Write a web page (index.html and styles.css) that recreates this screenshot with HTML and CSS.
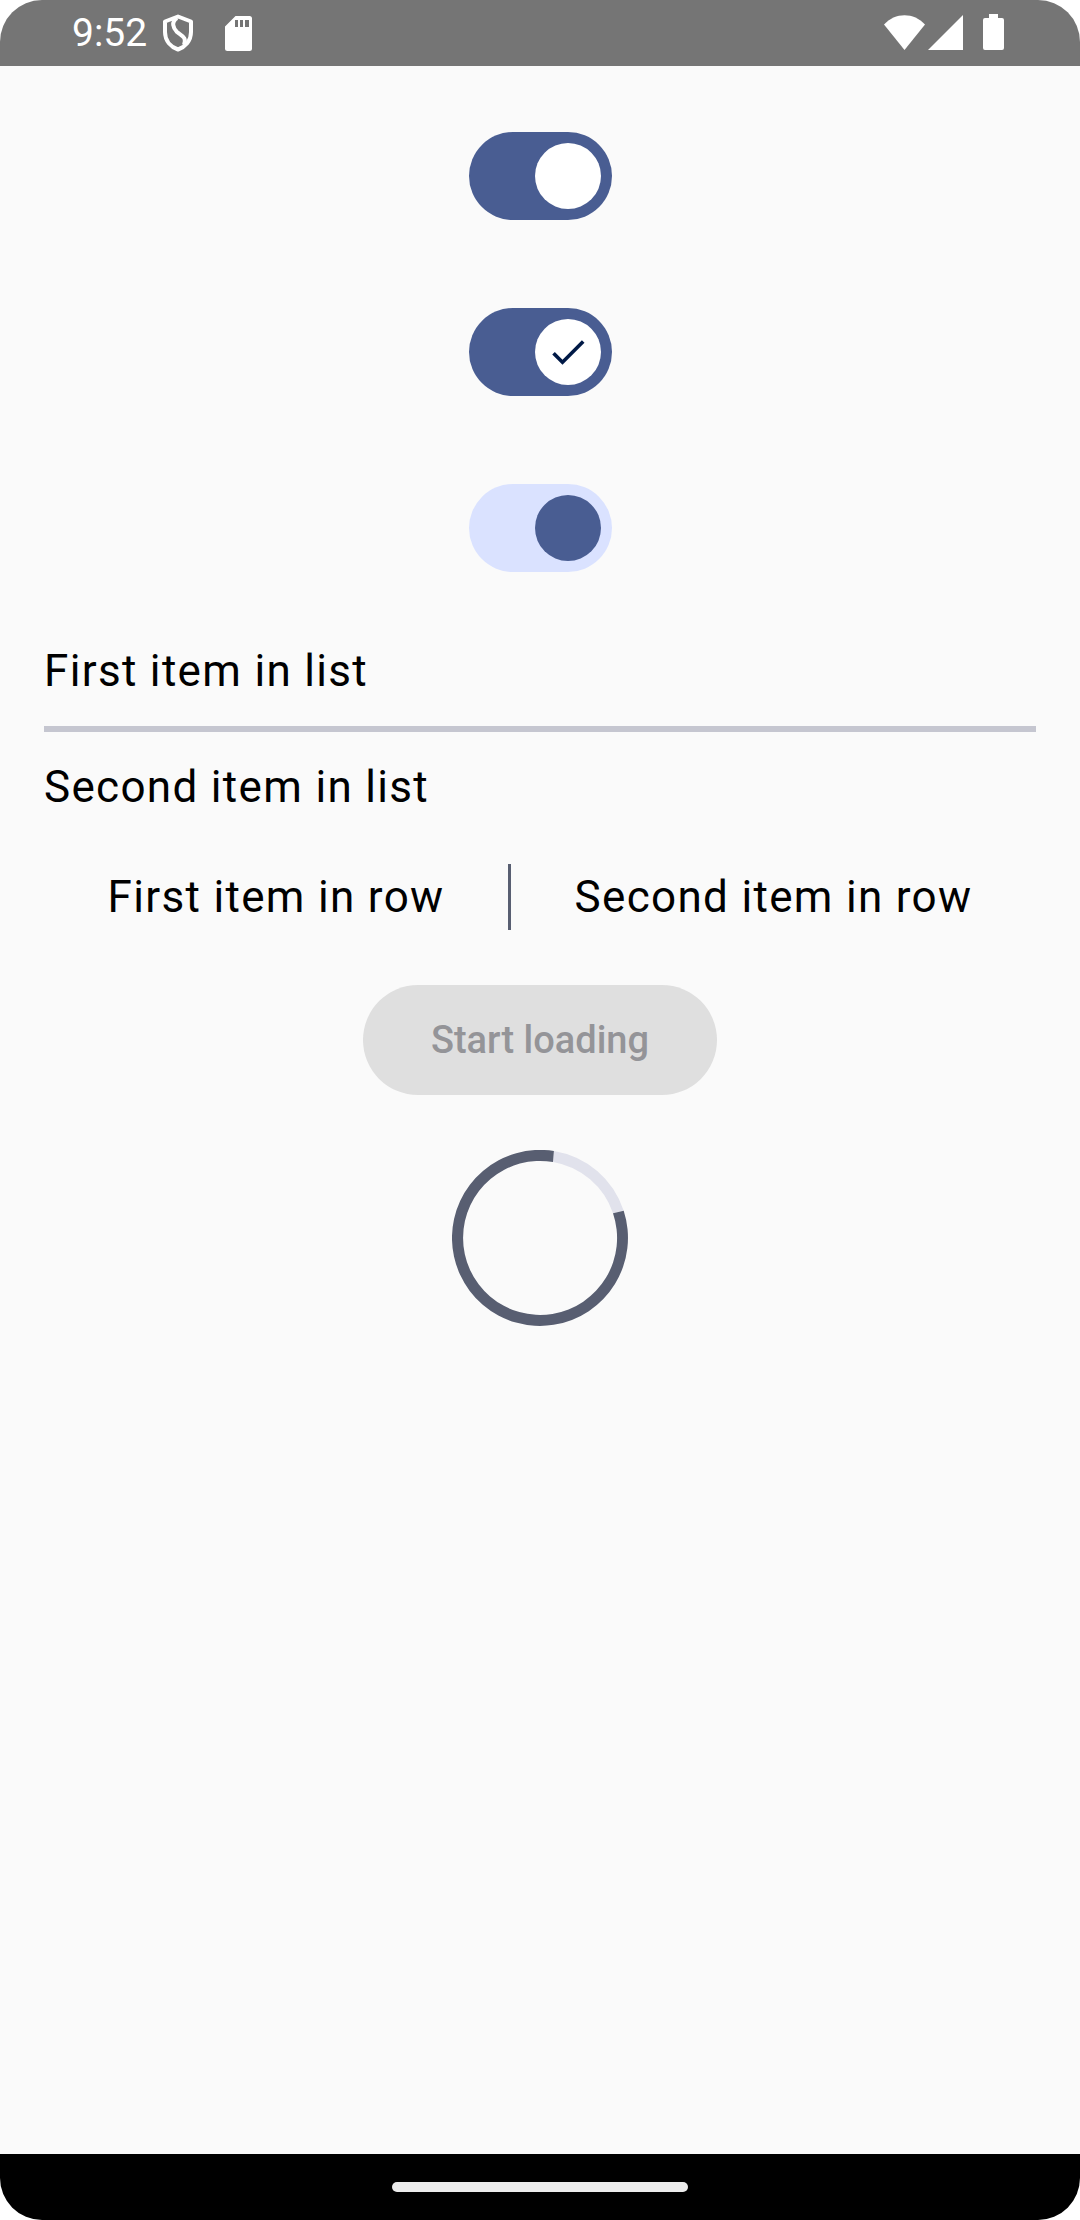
FILE: index.html
```html
<!DOCTYPE html>
<html lang="en">
<head>
  <meta charset="utf-8">
  <meta name="viewport" content="width=device-width, initial-scale=1">
  <title>Components</title>
  <link rel="stylesheet" href="styles.css">
</head>
<body>
  <div class="device">
    <header class="status-bar">
      <div class="status-start">
        <time class="clock">9:52</time>
        <svg class="icon-shield" viewBox="0 0 32 38" aria-hidden="true">
          <path d="M16 2.500 L29 7.500 V18 C29 27 23 33 16 35.500 C9 33 3 27 3 18 V7.500 Z"/>
          <path d="M15 4 C9 8 11 14 15 18 C20 22 25 23 22 31"/>
        </svg>
        <svg class="icon-card" viewBox="0 0 27 35" aria-hidden="true">
          <path fill-rule="evenodd" d="M10.500 0 H24.500 Q27 0 27 2.500 V32.500 Q27 35 24.500 35 H2.500 Q0 35 0 32.500 V10.500 Z M10 4 V11 H13 V4 Z M15 4 V11 H18 V4 Z M20 4 V11 H24 V4 Z"/>
        </svg>
      </div>
      <div class="status-end">
        <svg class="icon-wifi" viewBox="0 0 41 35" aria-hidden="true">
          <path d="M0 9.500 C11 -3 30 -3 41 9.500 L20.500 35 Z"/>
        </svg>
        <svg class="icon-signal" viewBox="0 0 35 35" aria-hidden="true">
          <path d="M35 0 V35 H0 Z"/>
        </svg>
        <svg class="icon-battery" viewBox="0 0 21 36" aria-hidden="true">
          <path d="M6 0 H15 V4 H19 Q21 4 21 6 V34 Q21 36 19 36 H2 Q0 36 0 34 V6 Q0 4 2 4 H6 Z"/>
        </svg>
      </div>
    </header>

    <main class="content">
      <section class="switches">
        <label class="switch">
          <input type="checkbox" role="switch" aria-label="Basic switch" checked>
          <span class="thumb"></span>
        </label>
        <label class="switch">
          <input type="checkbox" role="switch" aria-label="Switch with icon" checked>
          <span class="thumb">
            <svg class="icon-check" viewBox="0 0 24 24" aria-hidden="true">
              <path d="M9 16.170 4.830 12l-1.420 1.410L9 19 21 7l-1.410-1.410z"/>
            </svg>
          </span>
        </label>
        <label class="switch switch-tonal">
          <input type="checkbox" role="switch" aria-label="Switch with custom colors" checked>
          <span class="thumb"></span>
        </label>
      </section>

      <section class="list">
        <p>First item in list</p>
        <hr class="divider">
        <p>Second item in list</p>
      </section>

      <section class="row">
        <p>First item in row</p>
        <span class="divider-vertical"></span>
        <p>Second item in row</p>
      </section>

      <section class="loading">
        <button class="button" type="button" disabled>Start loading</button>
        <svg class="spinner" viewBox="0 0 176 176" role="progressbar" aria-label="Loading">
          <path class="spinner-track" d="M101.900 1 A88 88 0 0 1 171.700 60.800 L161 63.200 A77 77 0 0 0 101 12 Z"/>
          <path class="spinner-arc" d="M171.700 60.800 A88 88 0 1 1 101.900 1 L101 12 A77 77 0 1 0 161 63.200 Z"/>
        </svg>
      </section>
    </main>

    <footer class="nav-bar"><span class="nav-handle"></span></footer>
  </div>
</body>
</html>
```
FILE: styles.css
```css
* {
  box-sizing: border-box;
}

body {
  margin: 0;
  background: #ffffff;
  color: #000000;
  font-family: Roboto, sans-serif;
  font-size: 44px;
  line-height: 66px;
}

p {
  margin: 0;
  letter-spacing: 0.03em;
}

.device {
  display: flex;
  flex-direction: column;
  min-height: 100vh;
  overflow: hidden;
  border-radius: 42px;
  background: #fafafa;
}

/* Status bar */
.status-bar {
  display: flex;
  justify-content: space-between;
  height: 66px;
  padding: 0 76px 0 72px;
  background: #757575;
  color: #ffffff;
}

.status-start,
.status-end {
  display: flex;
  align-items: center;
}

.status-end {
  align-items: flex-end;
  padding-bottom: 16px;
}

.status-bar svg {
  display: block;
  fill: #ffffff;
}

.clock {
  font-size: 39px;
}

.status-bar .icon-shield {
  width: 32px;
  height: 38px;
  margin-left: 15px;
  fill: none;
  stroke: #ffffff;
  stroke-width: 4;
  stroke-linejoin: round;
}

.icon-card {
  width: 27px;
  height: 35px;
  margin-left: 31px;
}

.icon-wifi {
  width: 41px;
  height: 35px;
}

.icon-signal {
  width: 35px;
  height: 35px;
  margin-left: 3px;
}

.icon-battery {
  width: 21px;
  height: 36px;
  margin-left: 20px;
}

/* Content */
.content {
  flex: 1;
  padding: 66px 44px;
}

.switches {
  display: flex;
  flex-direction: column;
  align-items: center;
  gap: 88px;
}

.switch {
  display: grid;
  align-items: center;
  justify-items: end;
  width: 143px;
  height: 88px;
  padding: 11px;
  border-radius: 44px;
  background: #495d92;
}

.switch input,
.thumb {
  grid-area: 1 / 1;
  width: 66px;
  height: 66px;
  margin: 0;
  border-radius: 33px;
}

.switch input {
  opacity: 0;
}

.thumb {
  display: grid;
  place-items: center;
  background: #ffffff;
}

.switch-tonal {
  background: #dae2ff;
}

.switch-tonal .thumb {
  background: #495d92;
}

.icon-check {
  width: 44px;
  height: 44px;
  fill: #001946;
}

.list {
  display: grid;
  gap: 22px;
  margin-top: 66px;
}

.divider {
  width: 100%;
  height: 6px;
  margin: 0;
  border: 0;
  background: #c5c6d0;
}

.row {
  display: flex;
  justify-content: space-evenly;
  margin-top: 44px;
}

.divider-vertical {
  width: 3px;
  background: #585e71;
}

.loading {
  display: flex;
  flex-direction: column;
  align-items: center;
  gap: 55px;
  margin-top: 55px;
}

.button {
  height: 110px;
  padding: 0 68px;
  border: 0;
  border-radius: 55px;
  background: #dfdfdf;
  color: #949498;
  font-family: inherit;
  font-size: 38px;
  font-weight: 500;
}

.spinner {
  width: 176px;
  height: 176px;
}

.spinner-track {
  fill: #e1e2ec;
}

.spinner-arc {
  fill: #585e71;
}

/* Gesture navigation */
.nav-bar {
  display: grid;
  place-items: center;
  height: 66px;
  background: #000000;
}

.nav-handle {
  width: 296px;
  height: 10px;
  border-radius: 5px;
  background: #ececec;
}
```
